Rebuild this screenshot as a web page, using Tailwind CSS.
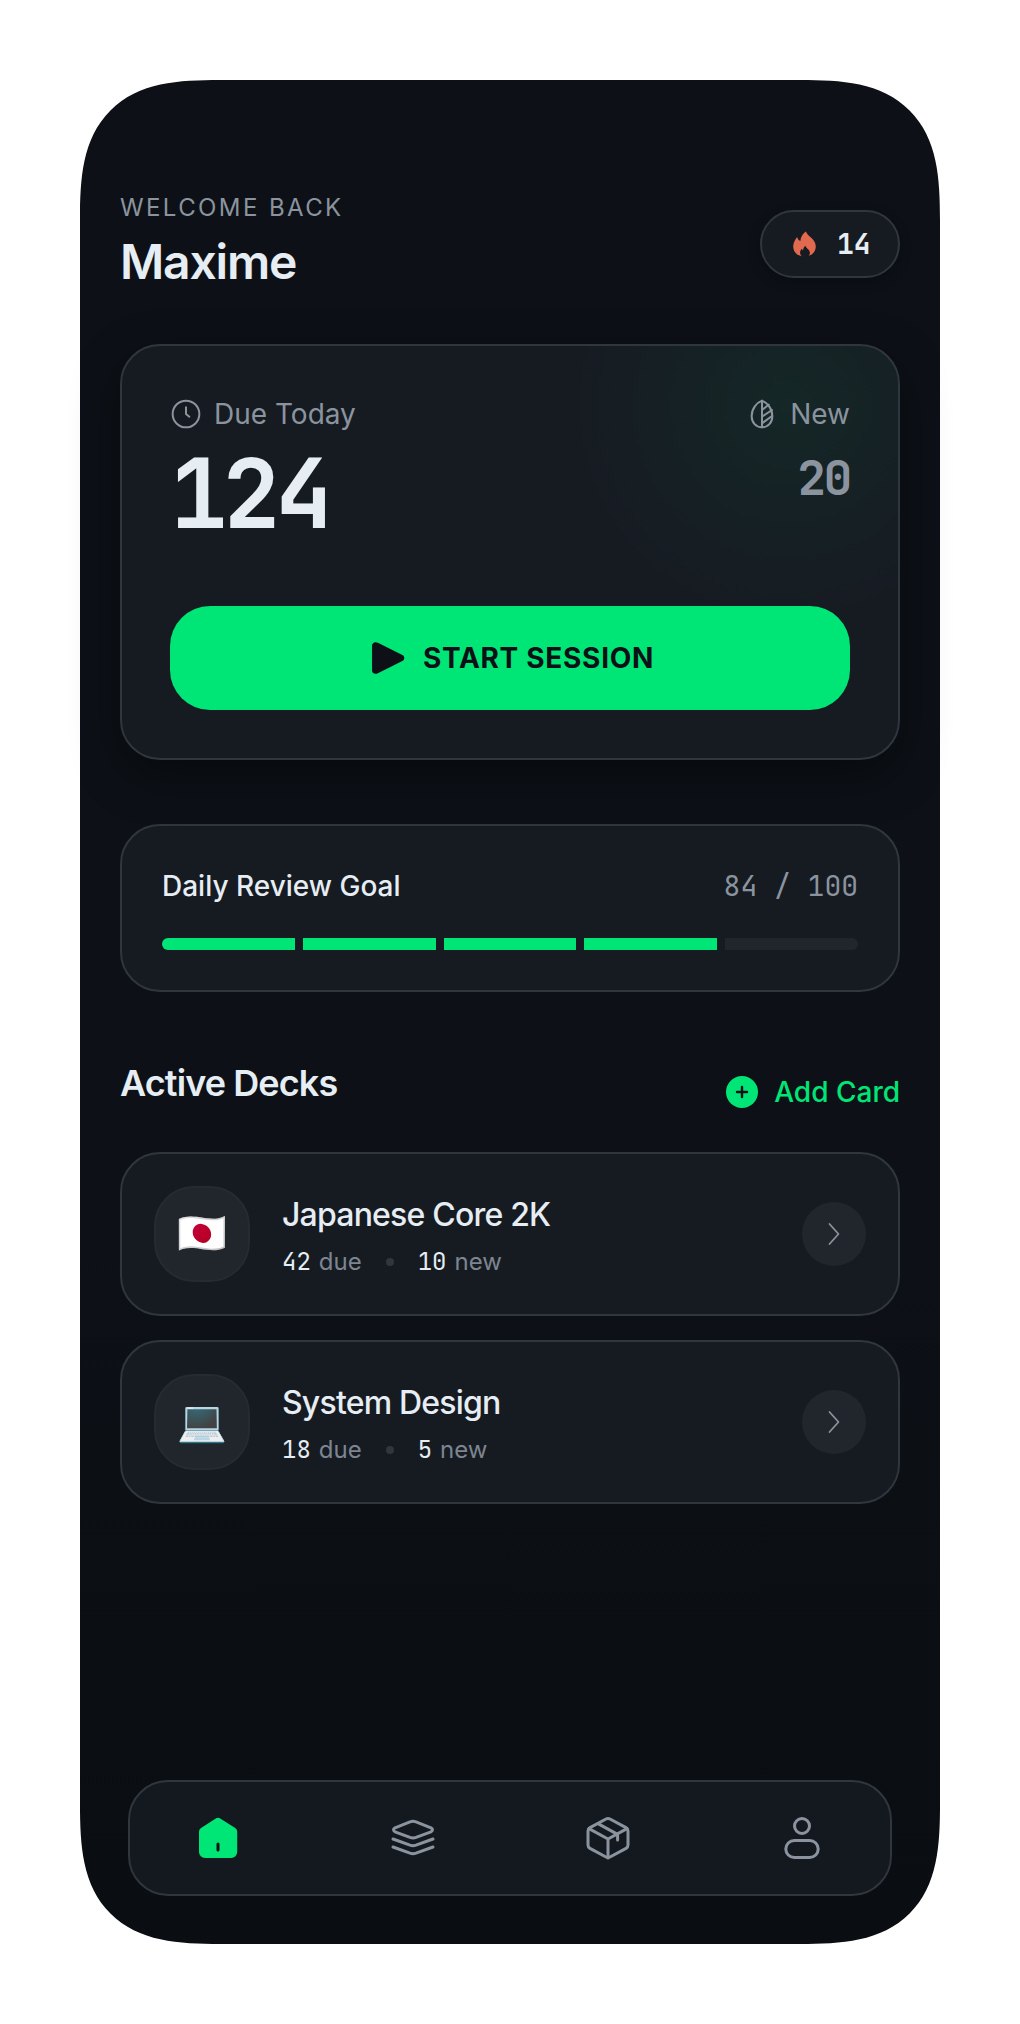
<!DOCTYPE html>
<html lang="en">
<head>
  <meta charset="UTF-8" />
  <meta name="viewport" content="width=device-width, initial-scale=1.0" />
  <title>Flashcards Home</title>
  <script src="https://cdn.jsdelivr.net/npm/@tailwindcss/browser@4"></script>
</head>
<body class="bg-white font-['Inter',sans-serif]">
  <div class="h-[2024px] p-20">
    <div class="h-[1864px] flex flex-col px-10 pb-12 pt-[112px] rounded-[140px] [corner-shape:superellipse(1.5)] bg-gradient-to-b from-[#0d1117] from-60% to-[#0a0d11]">

      <!-- header -->
      <header class="flex items-start justify-between">
        <div>
          <p class="text-[24px] leading-[32px] tracking-[0.1em] text-[#8b949e]">WELCOME BACK</p>
          <h1 class="mt-[10px] text-[48px] leading-[56px] font-semibold tracking-tight text-[#e6edf3]">Maxime</h1>
        </div>
        <div class="mt-[18px] flex h-[68px] w-[140px] items-center gap-[21px] rounded-full border-2 border-[#30363d] bg-[#161b22] pl-[31px] shadow-[0_4px_12px_rgba(0,0,0,0.3)]">
          <svg class="h-[26px] w-[23px]" viewBox="0 0 23 26.5">
            <path fill="#e0694e" d="M13 .5C14 5 23 8 23 15.5 23 22 18 26 11.5 26 5 26 0 22 0 15.5 0 12 2 8.5 4 6c.5 2 1.5 3.5 3.5 4C7.500 6 10 2.500 13 .5Z"/>
            <path fill="#161b22" d="M12.500 15c.4 2.500 4.500 4 4.500 7.200 0 2-1.200 3.600-2.600 4.300H9.800C8.400 25.800 7 24.200 7 22.200c0-1.800.8-3 1.800-4 .2 1 .7 1.300 1.300 1.300 0-1.800.8-3.300 2.400-4.500Z"/>
          </svg>
          <span class="font-['JetBrains_Mono','DejaVu_Sans_Mono',monospace] text-[28px] font-bold text-[#e6edf3]">14</span>
        </div>
      </header>

      <!-- due today -->
      <section class="relative mt-[54px] h-[416px] overflow-hidden rounded-[40px] border-2 border-[#30363d] bg-[#161b22] px-[48px] pt-[48px] shadow-[0_16px_48px_rgba(0,0,0,0.45)]">
        <div class="absolute -right-[110px] -top-[160px] h-[440px] w-[440px] rounded-full bg-[radial-gradient(circle,rgba(0,230,118,0.06),rgba(0,230,118,0)_70%)]"></div>
        <div class="relative flex h-[212px] justify-between">
          <div>
            <div class="flex h-10 items-center gap-3 text-[28px] text-[#8b949e]">
              <svg class="h-8 w-8" viewBox="0 0 24 24" fill="none" stroke="#8b949e" stroke-width="1.5" stroke-linecap="round" stroke-linejoin="round">
                <circle cx="12" cy="12" r="10"/><path d="M12 7v5l2.500 2"/>
              </svg>
              Due Today
            </div>
            <p class="mt-2 font-['JetBrains_Mono','DejaVu_Sans_Mono',monospace] text-[96px] leading-[104px] font-bold tracking-tighter text-[#e6edf3]">124</p>
          </div>
          <div class="text-right">
            <div class="flex h-10 items-center gap-3 text-[28px] text-[#8b949e]">
              <svg class="h-8 w-8" viewBox="0 0 24 24" fill="none" stroke="#8b949e" stroke-width="1.5" stroke-linecap="round" stroke-linejoin="round">
                <path d="M12 2c4 1.500 7.750 6 7.750 11.500 0 5-3.200 8.500-7.750 8.500s-7.750-3.500-7.750-8.500C4.250 8 8 3.500 12 2Z"/>
                <path d="M12 2v20M12 9l5-4M12 14l7.500-5M12 19l7.500-5.500"/>
              </svg>
              New
            </div>
            <p class="mt-4 font-['JetBrains_Mono','DejaVu_Sans_Mono',monospace] text-[48px] leading-[56px] font-bold tracking-tighter text-[#8b949e]">20</p>
          </div>
        </div>
        <button class="relative flex h-[104px] w-full items-center justify-center gap-[18px] rounded-[40px] bg-[#00e676] pl-[5px] text-[28px] font-bold tracking-[0.025em] text-[#0d1117]">
          <svg class="h-[34px] w-[34px]" viewBox="0 0 32 34" preserveAspectRatio="none" fill="#0d1117">
            <path d="M1 4.500C1 1.500 4 .3 6.500 1.800L29.500 14c2.500 1.300 2.500 4.700 0 6L6.500 32.200C4 33.700 1 32.500 1 29.500Z"/>
          </svg>
          START SESSION
        </button>
      </section>

      <!-- daily goal -->
      <section class="mt-[64px] h-[168px] rounded-[40px] border-2 border-[#30363d] bg-[#161b22] px-10 pt-[42px]">
        <div class="flex h-[36px] items-center justify-between">
          <span class="text-[28px] leading-[36px] font-medium text-[#e6edf3]">Daily Review Goal</span>
          <span class="font-['JetBrains_Mono','DejaVu_Sans_Mono',monospace] text-[28px] text-[#8b949e]">84 / 100</span>
        </div>
        <div class="mt-[34px] flex h-3 gap-2 overflow-hidden rounded-full">
          <div class="flex-1 bg-[#00e676]"></div>
          <div class="flex-1 bg-[#00e676]"></div>
          <div class="flex-1 bg-[#00e676]"></div>
          <div class="flex-1 bg-[#00e676]"></div>
          <div class="flex-1 bg-[#21262d]"></div>
        </div>
      </section>

      <!-- decks -->
      <div class="mt-[69px] flex items-start justify-between">
        <h2 class="text-[36px] leading-[44px] font-semibold tracking-tight text-[#e6edf3]">Active Decks</h2>
        <button class="mt-[13px] flex items-center gap-4 text-[28px] leading-[36px] font-medium text-[#00e676]">
          <span class="flex h-8 w-8 items-center justify-center rounded-full bg-[#00e676]">
            <svg class="h-4 w-4" viewBox="0 0 16 16" stroke="#0d1117" stroke-width="2.400" stroke-linecap="round"><path d="M8 3v10M3 8h10"/></svg>
          </span>
          Add Card
        </button>
      </div>

      <div class="mt-[42px] flex flex-col gap-6">
        <div class="flex h-[164px] items-center rounded-[40px] border-2 border-[#30363d] bg-[#161b22] px-8">
          <div class="flex h-24 w-24 items-center justify-center rounded-[40px] border-2 border-[#262b33] bg-[#21262d] text-[40px] font-['Noto_Color_Emoji',sans-serif]">🇯🇵</div>
          <div class="ml-8 flex-1 pt-[7px]">
            <p class="text-[32px] leading-[40px] font-medium tracking-tight text-[#e6edf3]">Japanese Core 2K</p>
            <div class="mt-[9px] flex items-center text-[24px] text-[#7d8590]">
              <span class="font-['JetBrains_Mono','DejaVu_Sans_Mono',monospace] text-[#e6edf3]">42</span><span class="ml-2">due</span>
              <span class="mx-[24px] h-2 w-2 rounded-full bg-[#30363d]"></span>
              <span class="font-['JetBrains_Mono','DejaVu_Sans_Mono',monospace] text-[#e6edf3]">10</span><span class="ml-2">new</span>
            </div>
          </div>
          <div class="flex h-16 w-16 items-center justify-center rounded-full bg-[#21262d]">
            <svg class="h-6 w-6" viewBox="0 0 24 24" fill="none" stroke="#8b949e" stroke-width="1.750" stroke-linecap="round" stroke-linejoin="round"><path d="M7.500 2l9 10-9 10"/></svg>
          </div>
        </div>
        <div class="flex h-[164px] items-center rounded-[40px] border-2 border-[#30363d] bg-[#161b22] px-8">
          <div class="flex h-24 w-24 items-center justify-center rounded-[40px] border-2 border-[#262b33] bg-[#21262d] text-[40px] font-['Noto_Color_Emoji',sans-serif]">💻</div>
          <div class="ml-8 flex-1 pt-[7px]">
            <p class="text-[32px] leading-[40px] font-medium tracking-tight text-[#e6edf3]">System Design</p>
            <div class="mt-[9px] flex items-center text-[24px] text-[#7d8590]">
              <span class="font-['JetBrains_Mono','DejaVu_Sans_Mono',monospace] text-[#e6edf3]">18</span><span class="ml-2">due</span>
              <span class="mx-[24px] h-2 w-2 rounded-full bg-[#30363d]"></span>
              <span class="font-['JetBrains_Mono','DejaVu_Sans_Mono',monospace] text-[#e6edf3]">5</span><span class="ml-2">new</span>
            </div>
          </div>
          <div class="flex h-16 w-16 items-center justify-center rounded-full bg-[#21262d]">
            <svg class="h-6 w-6" viewBox="0 0 24 24" fill="none" stroke="#8b949e" stroke-width="1.750" stroke-linecap="round" stroke-linejoin="round"><path d="M7.500 2l9 10-9 10"/></svg>
          </div>
        </div>
      </div>

      <!-- bottom nav -->
      <nav class="mx-2 mt-auto flex h-[116px] items-center justify-between rounded-[40px] border-2 border-[#30363d] bg-[#141920] px-16">
        <svg class="h-12 w-12" viewBox="0 0 24 24">
          <path fill="#00e676" d="M10.700 2.400a2.200 2.200 0 0 1 2.600 0l7.300 4.600a2.200 2.200 0 0 1 1 1.800V19a3 3 0 0 1-3 3H5.500a3 3 0 0 1-3-3V8.800a2.200 2.200 0 0 1 1-1.800Z"/>
          <path stroke="#0d1117" stroke-width="1.500" stroke-linecap="round" d="M12 15v3"/>
        </svg>
        <svg class="h-12 w-12" viewBox="0 0 24 24" fill="none" stroke="#8b949e" stroke-width="1.500" stroke-linecap="round" stroke-linejoin="round">
          <path d="M10.500 3.900Q12 3.400 13.500 3.900L21 6.900Q22.500 7.900 21 8.900L13.500 11.700Q12 12.200 10.500 11.700L3 8.900Q1.500 7.900 3 6.900Z"/>
          <path d="M2 12.500L10.500 15.600Q12 16.100 13.500 15.600L22 12.500"/>
          <path d="M2 16.500L10.500 19.600Q12 20.100 13.500 19.600L22 16.500"/>
        </svg>
        <svg class="h-12 w-12 translate-x-[1px]" viewBox="0 0 24 24" fill="none" stroke="#8b949e" stroke-width="1.500" stroke-linecap="round" stroke-linejoin="round">
          <path d="M11 2.500q1-.5 2 0l8 4.300q1 .6 1 1.700v7q0 1.100-1 1.700l-8 4.300q-1 .5-2 0l-8-4.300q-1-.6-1-1.700v-7q0-1.100 1-1.700Z"/>
          <path d="M2.500 7.300L12 12.500l9.500-5.200M12 12.500V22M7 4.800l9.800 5.400V13"/>
        </svg>
        <svg class="h-12 w-12" viewBox="0 0 24 24" fill="none" stroke="#8b949e" stroke-width="1.500">
          <circle cx="12" cy="6" r="3.750"/>
          <rect x="3.900" y="13.250" width="16.200" height="8.500" rx="4.250"/>
        </svg>
      </nav>
    </div>
  </div>
</body>
</html>
